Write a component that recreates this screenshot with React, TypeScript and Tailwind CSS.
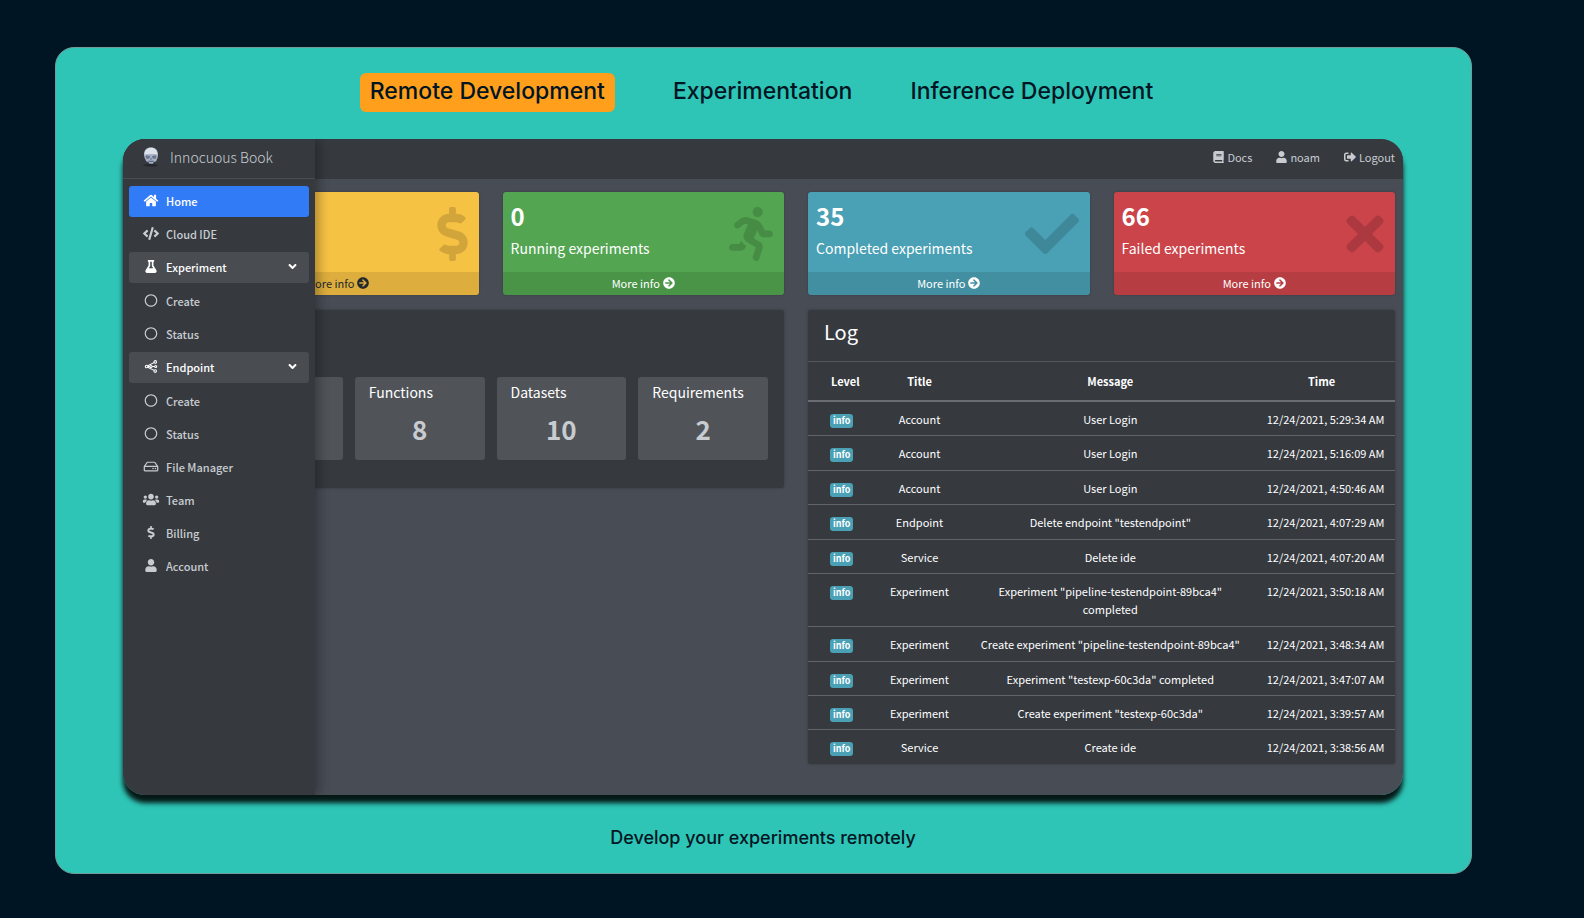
import React from "react";
import {
  FaAngleDown,
  FaArrowCircleRight,
  FaBook,
  FaCheck,
  FaCode,
  FaDollarSign,
  FaFlask,
  FaHome,
  FaRegCircle,
  FaRegHdd,
  FaRunning,
  FaSignOutAlt,
  FaTimes,
  FaUser,
  FaUsers,
} from "react-icons/fa";

type IconType = React.ComponentType<{ className?: string }>;

function EndpointIcon({ className }: { className?: string }) {
  return (
    <svg viewBox="0 0 16 16" className={className} fill="none" stroke="currentColor" strokeWidth="1.3" aria-hidden="true">
      <circle cx="2.6" cy="8" r="1.6" />
      <circle cx="8" cy="8" r="1.3" />
      <circle cx="13.2" cy="2.4" r="1.6" />
      <circle cx="13.8" cy="8" r="1.3" />
      <circle cx="13.2" cy="13.6" r="1.6" />
      <path d="M4.2 8h2.5M9.3 8h3.200M4 7.100 11.800 3.200M4 8.900l7.800 3.900" />
    </svg>
  );
}

function SkullLogo() {
  return (
    <svg viewBox="0 0 16 20" className="h-5 w-4" aria-hidden="true">
      <ellipse cx="7.5" cy="18.2" rx="7.5" ry="1.5" fill="#25282c" />
      <path d="M8 0.5C3.6 .5 1 3.2 1 7.2c0 2.400.6 4 1.500 5.200l.6 1.800 2.200.8.9 1.600 3.600 .100 1-1.700 2.400-.8.700-2C14.700 11 15 9.400 15 7.200 15 3.200 12.400.5 8 .5Z" fill="#a9b3c6" />
      <path d="M8 .8C4.300.8 1.800 3 1.500 7.600c2-.6 4-.7 6.500-.7s4.500.1 6.500.7C14.200 3 11.700.8 8 .8Z" fill="#dde1ea" />
      <path d="M2.400 9c1.300-.7 3.500-.5 4.700.3l-.7 2.300-2.900.400ZM13.600 9c-1.300-.7-3.500-.5-4.700.3l.7 2.300 2.900.400Z" fill="#6a7690" />
      <path d="m8 10.600-1 2h2ZM5 13.800h6l-.8 1.200H5.800Z" fill="#5a6580" />
    </svg>
  );
}

type NavEntry = { label: string; icon: IconType; active?: boolean; children?: NavEntry[] };

const NAV: NavEntry[] = [
  { label: "Home", icon: FaHome, active: true },
  { label: "Cloud IDE", icon: FaCode },
  {
    label: "Experiment",
    icon: FaFlask,
    children: [
      { label: "Create", icon: FaRegCircle },
      { label: "Status", icon: FaRegCircle },
    ],
  },
  {
    label: "Endpoint",
    icon: EndpointIcon,
    children: [
      { label: "Create", icon: FaRegCircle },
      { label: "Status", icon: FaRegCircle },
    ],
  },
  { label: "File Manager", icon: FaRegHdd },
  { label: "Team", icon: FaUsers },
  { label: "Billing", icon: FaDollarSign },
  { label: "Account", icon: FaUser },
];

const CARDS = [
  { value: "", label: "", icon: FaDollarSign, iconWidth: "w-[31px]", tone: "bg-[#f6c244] text-[#24292e]" },
  { value: "0", label: "Running experiments", icon: FaRunning, iconWidth: "w-[44px]", tone: "bg-[#53a551] text-white" },
  { value: "35", label: "Completed experiments", icon: FaCheck, iconWidth: "w-[54px]", tone: "bg-[#4aa0b5] text-white" },
  { value: "66", label: "Failed experiments", icon: FaTimes, iconWidth: "w-[38px]", tone: "bg-[#cb444a] text-white" },
];

const COUNTS = [
  { label: "", value: "" },
  { label: "Functions", value: "8" },
  { label: "Datasets", value: "10" },
  { label: "Requirements", value: "2" },
];

const LOG = [
  ["Account", "User Login", "5:29:34"],
  ["Account", "User Login", "5:16:09"],
  ["Account", "User Login", "4:50:46"],
  ["Endpoint", 'Delete endpoint "testendpoint"', "4:07:29"],
  ["Service", "Delete ide", "4:07:20"],
  ["Experiment", 'Experiment "pipeline-testendpoint-89bca4" completed', "3:50:18"],
  ["Experiment", 'Create experiment "pipeline-testendpoint-89bca4"', "3:48:34"],
  ["Experiment", 'Experiment "testexp-60c3da" completed', "3:47:07"],
  ["Experiment", 'Create experiment "testexp-60c3da"', "3:39:57"],
  ["Service", "Create ide", "3:38:56"],
];

function NavItem({ item }: { item: NavEntry }) {
  const Icon = item.icon;
  const tone = item.active
    ? "bg-[#327bf6] text-white"
    : item.children
      ? "bg-[#494d52] text-white"
      : "text-[#c8ccd1]";
  return (
    <li className="flex flex-col gap-[2px]">
      <a href="#" className={`flex h-[31px] items-center rounded-[3px] pb-[2px] pl-[13px] pr-[10px] text-[11px] font-medium leading-[18px] ${tone}`}>
        <Icon className="mr-[6px] h-[13px] w-[18px]" />
        <span className="flex-1">{item.label}</span>
        {item.children && <FaAngleDown className="text-[13px]" />}
      </a>
      {item.children && (
        <ul className="flex flex-col gap-[2px] pt-px">
          {item.children.map((child) => (
            <NavItem key={child.label} item={child} />
          ))}
        </ul>
      )}
    </li>
  );
}

function Sidebar() {
  return (
    <aside className="absolute inset-y-0 left-0 z-10 w-48 bg-[#363a3f] shadow-[4px_0_10px_rgba(0,0,0,0.3)]">
      <a href="#" className="flex h-10 items-center gap-[11px] border-b border-[#4a4e54] pb-1 pl-5 text-[14px] font-light leading-5 text-[#c8ccd1]">
        <SkullLogo />
        Innocuous Book
      </a>
      <nav className="px-[6px] pt-[7px]">
        <ul className="flex flex-col gap-[2px]">
          {NAV.map((item) => (
            <NavItem key={item.label} item={item} />
          ))}
        </ul>
      </nav>
    </aside>
  );
}

function StatCard({ value, label, icon: Icon, iconWidth, tone }: (typeof CARDS)[number]) {
  return (
    <div className={`flex h-[103px] flex-col overflow-hidden rounded-[3px] shadow-[0_0_2px_rgba(0,0,0,0.3)] ${tone}`}>
      <div className="flex flex-1 items-center justify-between pl-2 pr-[11px] pt-[3px]">
        <div>
          <p className="h-7 text-[24px] font-bold leading-7">{value}</p>
          <p className="h-9 text-[14px] leading-9">{label}</p>
        </div>
        <Icon className={`h-[54px] text-black/15 ${iconWidth}`} />
      </div>
      <a href="#" className="flex h-[23px] items-center justify-center gap-[3px] bg-black/10 pb-px text-[11px] leading-[18px]">
        More info
        <FaArrowCircleRight className="text-[12px]" />
      </a>
    </div>
  );
}

function LogPanel() {
  return (
    <section className="overflow-hidden rounded-[3px] bg-[#363a3f] shadow-[0_0_3px_rgba(0,0,0,0.3)]">
      <h2 className="h-[52px] border-b border-[#53575d] px-4 pt-2 text-[20px] leading-7">Log</h2>
      <table className="h-[402px] w-full table-fixed border-collapse text-center text-[11px] leading-[18px]">
        <colgroup>
          <col className="w-[10%]" />
          <col className="w-[18%]" />
          <col className="w-[47%]" />
          <col className="w-[25%]" />
        </colgroup>
        <thead>
          <tr className="border-b-2 border-[#6a6e74] font-bold">
            <th className="py-[10px] pl-4">Level</th>
            <th>Title</th>
            <th>Message</th>
            <th>Time</th>
          </tr>
        </thead>
        <tbody>
          {LOG.map(([title, message, time]) => (
            <tr key={time} className="border-t border-[#61656b] align-top first:border-t-0">
              <td className="pb-[7px] pl-[22px] pt-2 text-left">
                <span className="inline-block h-[14px] rounded-[3px] bg-[#4aa0b5] px-[3px] text-[9px] font-bold leading-[14px]">info</span>
              </td>
              <td className="pb-[7px] pt-2">{title}</td>
              <td className="px-1 pb-[7px] pt-2">{message}</td>
              <td className="whitespace-nowrap pb-[7px] pl-2 pt-2">12/24/2021, {time} AM</td>
            </tr>
          ))}
        </tbody>
      </table>
    </section>
  );
}

function Dashboard() {
  return (
    <div className="relative overflow-hidden rounded-[22px] bg-[#484d55] font-['Noto_Sans_CJK_SC','Noto_Sans',sans-serif] text-white">
      <Sidebar />
      <header className="flex h-10 items-center justify-end gap-6 bg-[#363a3f] pb-1 pr-2 text-[11px] leading-[18px] text-[#c8ccd1]">
        <a href="#" className="flex items-center gap-[3px]"><FaBook className="h-[12px] w-[11px]" />Docs</a>
        <a href="#" className="flex items-center gap-[3px]"><FaUser className="h-[12px] w-[11px]" />noam</a>
        <a href="#" className="flex items-center gap-[3px]"><FaSignOutAlt className="h-[12px] w-[12px]" />Logout</a>
      </header>
      <main className="pb-[31px] pl-[74px] pr-2 pt-[13px]">
        <div className="grid grid-cols-4 gap-6">
          {CARDS.map((card) => (
            <StatCard key={card.tone} {...card} />
          ))}
        </div>
        <div className="mt-[15px] grid grid-cols-2 items-start gap-6">
          <section className="rounded-[3px] bg-[#363a3f] px-4 pb-7 pt-[67px] shadow-[0_0_3px_rgba(0,0,0,0.3)]">
            <div className="grid grid-cols-4 gap-3">
              {COUNTS.map((c) => (
                <div key={c.label} className="h-[83px] rounded-[3px] bg-[#505459] px-[14px] pt-[5px]">
                  <p className="h-5 text-[14px] leading-5">{c.label}</p>
                  <p className="mt-[7px] text-center text-[26px] font-bold leading-10 text-[#c8ccd1]">{c.value}</p>
                </div>
              ))}
            </div>
          </section>
          <LogPanel />
        </div>
      </main>
    </div>
  );
}

export default function App() {
  return (
    <div className="min-h-screen bg-[#001523] pb-11 pl-[55px] pr-[112px] pt-[47px] font-['Inter',sans-serif] text-[#001523]">
      <div className="rounded-[19px] border border-[#6f9c98] bg-[#2ec5b6] pb-[22px] pl-[67px] pr-[68px] pt-[25px]">
        <div className="flex items-center justify-center gap-[58px] pr-[13px] text-[23px] font-medium leading-[37px]">
          <button type="button" className="rounded-md bg-[#ff9f1c] px-[10px] pb-[2px]">Remote Development</button>
          <button type="button" className="pb-[2px]">Experimentation</button>
          <button type="button" className="pb-[2px]">Inference Deployment</button>
        </div>
        <div className="mt-[27px] rounded-[22px] shadow-[0_8px_5px_rgba(0,0,0,0.88)]">
          <Dashboard />
        </div>
        <p className="mt-[29px] text-center text-[18px] font-medium leading-[27px]">Develop your experiments remotely</p>
      </div>
    </div>
  );
}
